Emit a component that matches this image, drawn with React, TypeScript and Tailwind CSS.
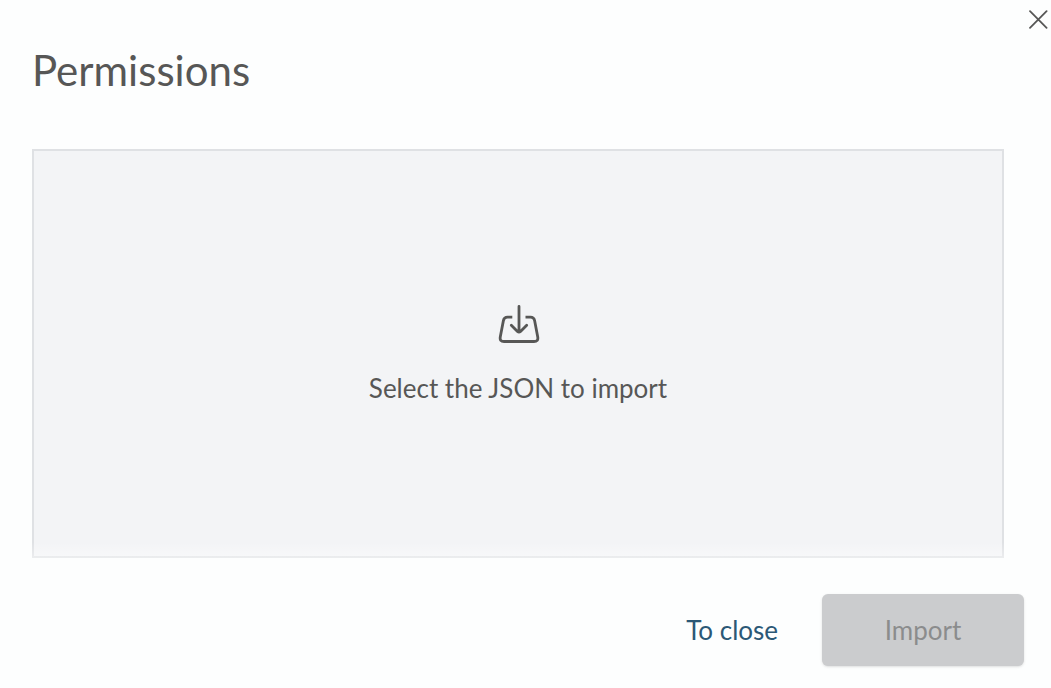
import { useState } from 'react';

function CloseIcon() {
  return (
    <svg className="h-5 w-5" viewBox="0 0 20 20" fill="none" stroke="currentColor" strokeWidth="1.8" strokeLinecap="round">
      <path d="M2 1.2 18.6 17.8M18.6 1.2 2 17.8" />
    </svg>
  );
}

function ImportIcon() {
  return (
    <svg
      className="h-10 w-11"
      viewBox="0 0 44 40"
      fill="none"
      stroke="currentColor"
      strokeWidth="2.8"
      strokeLinejoin="round"
    >
      <path d="M16.3 13.2H11.5Q8.1 13.2 7.4 16.6L4.3 32.7Q3.4 37.5 8 37.5H38Q42.6 37.5 41.7 32.7L38.6 16.6Q37.9 13.2 34.5 13.2H29.5" />
      <path d="M23 2.5V28M15.3 21.2 21.5 27.4Q23 28.8 24.5 27.4L30.7 21.2" strokeLinecap="round" />
    </svg>
  );
}

export default function App() {
  const [file, setFile] = useState<File | null>(null);

  return (
    <div className="flex min-h-screen flex-col bg-[#fdfefe] font-['Lato','Noto_Sans',sans-serif] text-[#575756]">
      {/* Header */}
      <header className="flex items-start justify-between pl-8">
        <h1 className="pt-10 text-[42px] leading-[60px]">Permissions</h1>
        <button type="button" aria-label="Close" className="pt-[10px] pr-[3px]">
          <CloseIcon />
        </button>
      </header>

      {/* Drop zone */}
      <main className="flex flex-1 flex-col pt-[49px] pr-[47px] pl-8">
        <label className="relative flex min-h-[409px] flex-1 cursor-pointer flex-col items-center justify-center gap-7 border-2 border-[#dfe1e4] bg-[#f3f4f6]">
          <ImportIcon />
          <span className="text-[26px] leading-8">{file ? file.name : 'Select the JSON to import'}</span>
          <input
            type="file"
            accept="application/json"
            className="sr-only"
            onChange={(e) => setFile(e.target.files?.[0] ?? null)}
          />
          {/* Fade at the lower edge */}
          <span className="pointer-events-none absolute -inset-x-0.5 -bottom-0.5 h-4 bg-linear-to-t from-white/40 to-transparent" />
        </label>
      </main>

      {/* Actions */}
      <footer className="flex items-center justify-end gap-11 pt-9 pr-[27px] pb-[22px] text-[26px] leading-8">
        <button type="button" className="text-[#2b5876]">
          To close
        </button>
        <button
          type="button"
          disabled={!file}
          className="h-[72px] w-[202px] rounded-md bg-[#cbccce] text-[#8b8c8d] shadow-sm"
        >
          Import
        </button>
      </footer>
    </div>
  );
}
